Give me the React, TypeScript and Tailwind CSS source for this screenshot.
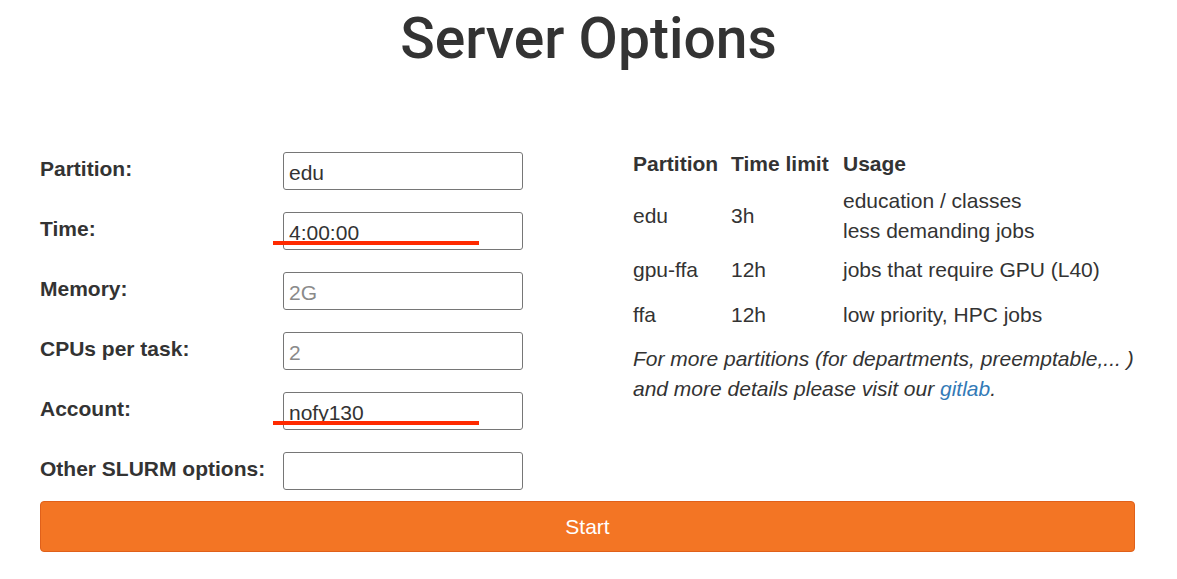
import { useState } from "react";

type Field = {
  id: string;
  label: string;
  value: string;
  placeholder?: string;
  marked?: boolean;
};

const fields: Field[] = [
  { id: "partition", label: "Partition:", value: "edu" },
  { id: "time", label: "Time:", value: "4:00:00", marked: true },
  { id: "mem", label: "Memory:", value: "", placeholder: "2G" },
  { id: "cpus", label: "CPUs per task:", value: "", placeholder: "2" },
  { id: "account", label: "Account:", value: "nofy130", marked: true },
  { id: "other", label: "Other SLURM options:", value: "" },
];

const partitions = [
  { name: "edu", limit: "3h", usage: ["education / classes", "less demanding jobs"], row: "h-[63px]" },
  { name: "gpu-ffa", limit: "12h", usage: ["jobs that require GPU (L40)"], row: "h-[45px]" },
  { name: "ffa", limit: "12h", usage: ["low priority, HPC jobs"], row: "h-[45px]" },
];

export default function App() {
  const [values, setValues] = useState<Record<string, string>>(
    Object.fromEntries(fields.map((f) => [f.id, f.value]))
  );

  return (
    <main className="w-[1177px] h-[579px] bg-white text-[#333] text-[21px] leading-[30px] font-['Liberation_Sans',Arial,sans-serif] overflow-hidden">
      <h1 className="text-center text-[57px] leading-[60px] pt-[9px] font-medium font-['Roboto','Liberation_Sans',sans-serif]">
        Server Options
      </h1>

      <div className="flex px-[40px] mt-[83px]">
        <form className="w-[593px] flex flex-col gap-[22px]">
          {fields.map((f) => (
            <div key={f.id} className="flex items-start">
              <label htmlFor={f.id} className="w-[243px] pt-[2px] font-bold">
                {f.label}
              </label>
              <div className="relative">
                <input
                  id={f.id}
                  value={values[f.id]}
                  placeholder={f.placeholder}
                  onChange={(e) => setValues((prev) => ({ ...prev, [f.id]: e.target.value }))}
                  className="w-[240px] h-[38px] px-[5px] pt-[3px] border border-[#767676] rounded-[3px] text-[21px] text-[#333] placeholder:text-[#8a8a8a] outline-none"
                />
                {f.marked && (
                  <span className="absolute left-[-10px] top-[29px] w-[206px] h-[4px] bg-[#ff2a00]" />
                )}
              </div>
            </div>
          ))}
        </form>

        <div className="flex-1">
          <div className="grid grid-cols-[98px_112px_1fr] font-bold h-[35px] -mt-[3px]">
            <span>Partition</span>
            <span>Time limit</span>
            <span>Usage</span>
          </div>
          {partitions.map((p) => (
            <div key={p.name} className={`grid grid-cols-[98px_112px_1fr] items-center ${p.row}`}>
              <span>{p.name}</span>
              <span>{p.limit}</span>
              <span className="flex flex-col">
                {p.usage.map((u) => (
                  <span key={u}>{u}</span>
                ))}
              </span>
            </div>
          ))}
          <p className="italic mt-[7px]">
            For more partitions (for departments, preemptable,... )
            <br />
            and more details please visit our{" "}
            <a href="#" className="text-[#337ab7]">
              gitlab
            </a>
            .
          </p>
        </div>
      </div>

      <div className="pl-[40px] pr-[42px] mt-[11px]">
        <button className="w-full h-[51px] bg-[#f37524] border border-[#e0601a] rounded-[4px] text-white text-[21px]">
          Start
        </button>
      </div>
    </main>
  );
}
